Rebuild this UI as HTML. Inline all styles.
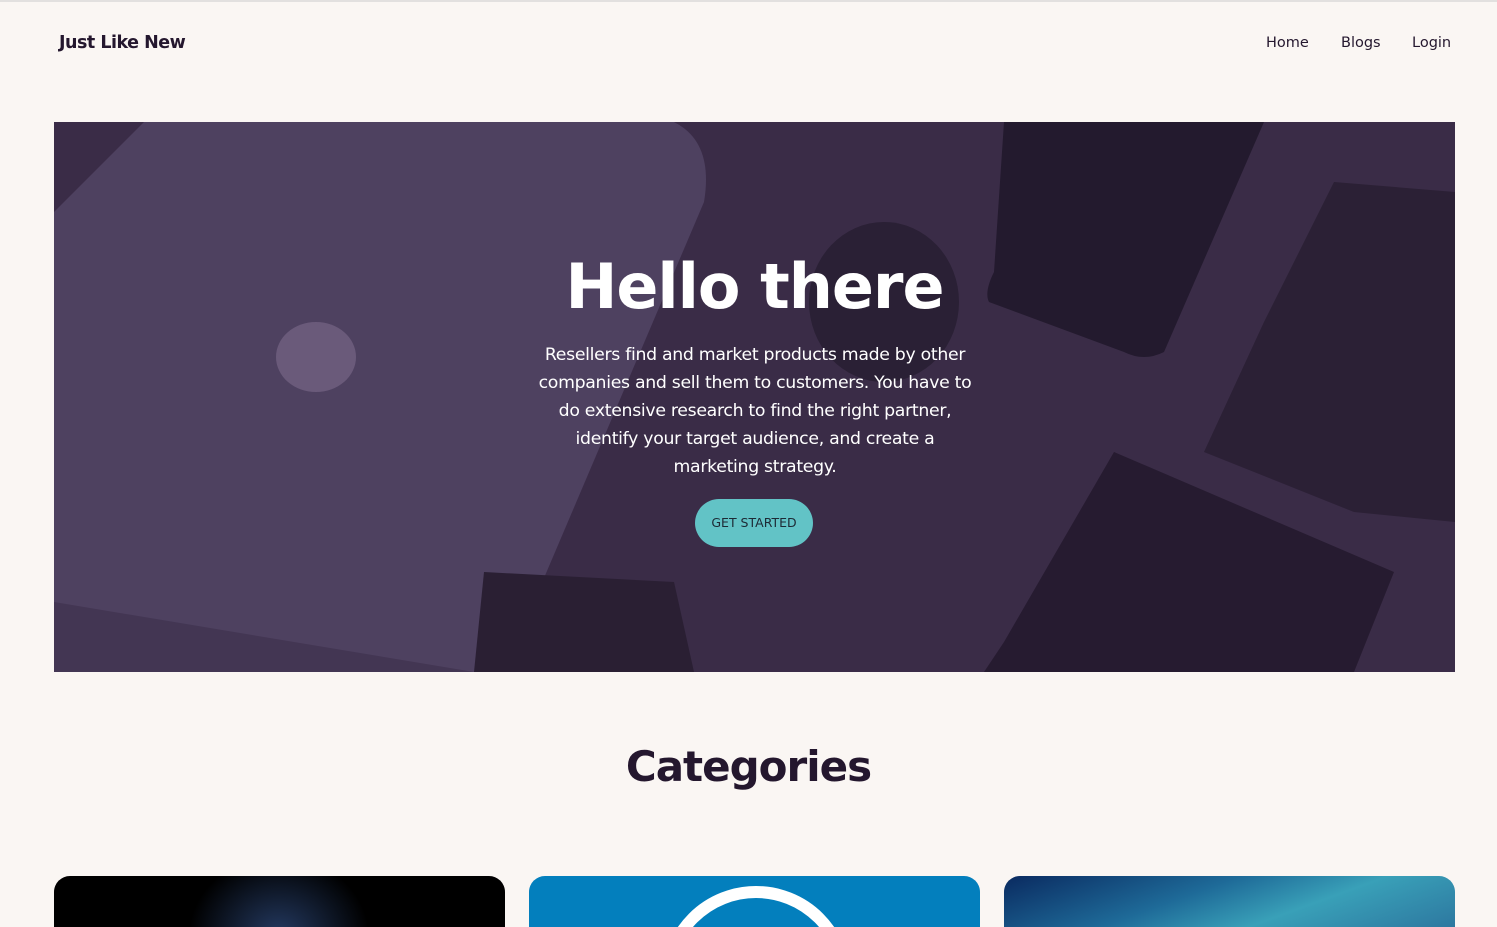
<!DOCTYPE html>
<html><head><meta charset="utf-8"><style>
*{margin:0;padding:0;box-sizing:border-box}
html,body{width:1497px;height:927px;overflow:hidden}
body{background:#faf6f3;font-family:"DejaVu Sans","Liberation Sans",sans-serif;color:#24172e;position:relative}
.top{position:absolute;left:0;top:0;width:100%;height:2px;background:#e2e0df}
.logo{position:absolute;left:59px;top:33px;font-size:17.5px;font-weight:bold;letter-spacing:-0.5px}
.nav{position:absolute;top:35px;font-size:14.5px}
.hero{position:absolute;left:54px;top:122px;width:1401px;height:550px;background:#3a2c47;overflow:hidden}
.h1{position:absolute;left:0;width:100%;top:128px;text-align:center;color:#fff;font-size:62px;font-weight:bold;letter-spacing:-1px}
.p{position:absolute;left:481px;width:440px;top:219px;text-align:center;color:#fff;font-size:17.3px;line-height:28px;letter-spacing:-0.3px}
.btn{position:absolute;left:641px;top:377px;width:118px;height:48px;border-radius:24px;background:#62c3c6;color:#1d2a35;font-size:12.5px;text-align:center;line-height:48px}
.cat{position:absolute;top:742px;width:100%;text-align:center;font-size:42px;font-weight:bold;letter-spacing:-1px}
.card{position:absolute;top:876px;width:451px;height:51px;border-radius:16px 16px 0 0;overflow:hidden}
</style></head><body>
<div class="top"></div>
<div class="logo">Just Like New</div>
<div class="nav" style="left:1266px">Home</div>
<div class="nav" style="left:1341px">Blogs</div>
<div class="nav" style="left:1412px">Login</div>
<div class="hero">
<svg width="1401" height="550" style="position:absolute;left:0;top:0">
<path d="M0 90 L90 0 L620 0 Q660 20 650 80 L450 550 L0 550 Z" fill="#4e4160"/>
<path d="M0 480 L420 550 L0 550Z" fill="#433653"/>
<path d="M950 0 L1210 0 L1110 230 Q1090 240 1070 230 L935 180 Q930 170 940 150Z" fill="#231a2e"/>
<path d="M1210 200 L1280 60 L1401 70 L1401 400 L1300 390 L1150 330Z" fill="#2b2035"/>
<path d="M950 520 L1060 330 L1340 450 L1300 550 L930 550Z" fill="#261b30"/>
<path d="M430 450 L620 460 L640 550 L420 550Z" fill="#2a1f33"/>
<ellipse cx="262" cy="235" rx="40" ry="35" fill="#6a5a7a"/>
<ellipse cx="830" cy="180" rx="75" ry="80" fill="#2a2035"/>
</svg>
<div class="h1">Hello there</div>
<div class="p">Resellers find and market products made by other companies and sell them to customers. You have to do extensive research to find the right partner, identify your target audience, and create a marketing strategy.</div>
<div class="btn">GET STARTED</div>
</div>
<div class="cat">Categories</div>
<div class="card" style="left:54px;background:radial-gradient(ellipse 90px 80px at 225px 60px,#243a62,#000)"></div>
<div class="card" style="left:529px;background:#037fbd"><div style="position:absolute;left:132px;top:10px;width:190px;height:190px;border-radius:50%;border:12px solid #fff"></div></div>
<div class="card" style="left:1004px;background:linear-gradient(160deg,#0a2a60 0%,#1e6a98 40%,#39a0b8 65%,#2d78a0 100%)"></div>
</body></html>
